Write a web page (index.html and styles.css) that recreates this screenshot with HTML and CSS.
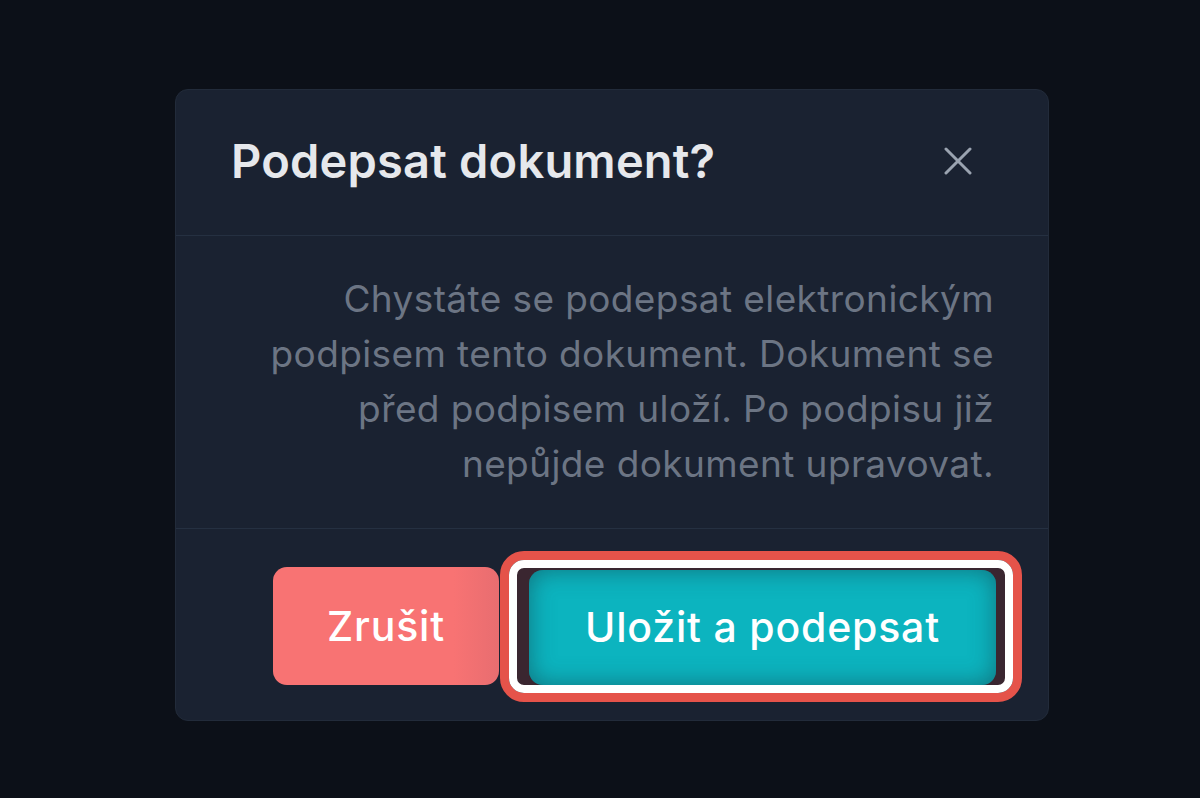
FILE: index.html
```html
<!DOCTYPE html>
<html lang="cs">
<head>
<meta charset="utf-8">
<title>Podepsat dokument?</title>
<link rel="stylesheet" href="styles.css">
</head>
<body>
<div class="modal">
  <div class="modal-header">
    <h2 class="modal-title">Podepsat dokument?</h2>
    <button class="close-btn" aria-label="Zavřít">
      <svg width="28" height="28" viewBox="0 0 28 28" fill="none" stroke="currentColor" stroke-width="3" stroke-linecap="round"><path d="M2 2L26 26M26 2L2 26"/></svg>
    </button>
  </div>
  <div class="modal-body">
    <p class="modal-text">Chystáte se podepsat elektronickým<br>podpisem tento dokument. Dokument se<br>před podpisem uloží. Po podpisu již<br>nepůjde dokument upravovat.</p>
  </div>
  <div class="modal-footer">
    <button class="btn btn-cancel">Zrušit</button>
    <div class="ring-outer">
      <div class="ring-inner">
        <button class="btn btn-primary">Uložit a podepsat</button>
      </div>
    </div>
  </div>
</div>
</body>
</html>
```

FILE: styles.css
```css
* { box-sizing: border-box; }
html, body { margin: 0; padding: 0; }
body {
  background: #0c1018;
  width: 1200px;
  height: 798px;
  padding: 89px 0 0 175px;
  font-family: "Inter", "Noto Sans", sans-serif;
}
.modal {
  width: 874px;
  height: 632px;
  background: #1a2231;
  border: 1px solid #222b3a;
  border-radius: 13px;
  display: flex;
  flex-direction: column;
  overflow: hidden;
}
.modal-header {
  height: 146px;
  display: flex;
  align-items: center;
  justify-content: space-between;
  padding: 0 76px 4px 55px;
  border-bottom: 1px solid #253041;
}
.modal-title {
  margin: 0;
  font-size: 47px;
  font-weight: 600;
  color: #e6e8ec;
  letter-spacing: 0.2px;
}
.close-btn {
  background: none;
  border: 0;
  padding: 0;
  color: #9aa3b0;
  display: flex;
}
.modal-body {
  height: 293px;
  padding: 35px 54px 0 54px;
  border-bottom: 1px solid #253041;
}
.modal-text {
  margin: 0;
  text-align: right;
  font-size: 37px;
  line-height: 55px;
  color: #6c7584;
  letter-spacing: 0.4px;
}
.modal-footer {
  flex: 1;
  display: flex;
  justify-content: flex-end;
  align-items: center;
  padding: 3px 26px 0 0;
}
.btn {
  border: 0;
  font-family: inherit;
  font-size: 41px;
  font-weight: 500;
  letter-spacing: 0.8px;
  color: #ffffff;
  border-radius: 14px;
}
.btn-cancel {
  width: 226px;
  height: 118px;
  background: linear-gradient(90deg, #f87373 0%, #f87373 80%, #e86d70 100%);
}
.ring-outer {
  margin-left: 1px;
  border: 9px solid #e5534a;
  border-radius: 24px;
}
.ring-inner {
  border: 8px solid #ffffff;
  border-radius: 15px;
  background: #3a2630;
  padding: 2px 9px 0 12px;
  display: flex;
}
.btn-primary {
  width: 467px;
  height: 115px;
  background: #0cb4bf;
  box-shadow: inset 0 0 24px rgba(20, 60, 70, 0.55);
  border-radius: 14px;
}
```
